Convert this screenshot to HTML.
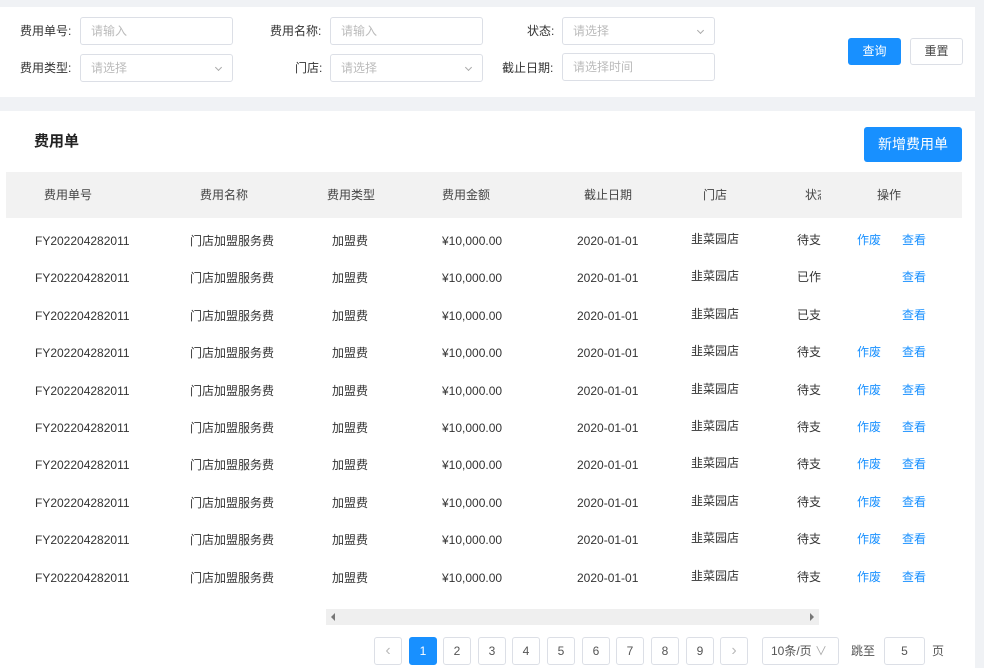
<!DOCTYPE html><html><head><meta charset="utf-8"><style>
*{margin:0;padding:0;box-sizing:border-box}
body{width:984px;height:668px;background:#f0f2f5;font-family:"Liberation Sans","Noto Sans CJK SC",sans-serif;font-size:12px;color:#333;position:relative;overflow:hidden}
.a{position:absolute;white-space:nowrap}
.card{position:absolute;background:#fff;left:0;width:975px}
.lbl{position:absolute;font-size:12px;color:#333;text-align:right;line-height:28px;white-space:nowrap}
.in{position:absolute;height:28px;border:1px solid #dcdfe6;border-radius:3px;color:#bbb;font-size:12px;line-height:26px;padding-left:10px;white-space:nowrap}
.chev{position:absolute;right:11px;top:10px;width:5px;height:5px;border-right:1px solid #aaa;border-bottom:1px solid #aaa;transform:rotate(45deg)}
.th{position:absolute;top:187px;font-size:12px;color:#444;white-space:nowrap;line-height:16px}
.c{position:absolute;font-size:12px;color:#333;white-space:nowrap;line-height:16px;height:16px}
.bl{color:#1890ff}
.pg{position:absolute;top:637px;width:28px;height:28px;border:1px solid #dcdfe6;border-radius:3px;text-align:center;line-height:26px;font-size:12px;color:#555;white-space:nowrap}
</style></head><body>
<div class="card" style="top:7px;height:90px"></div>
<div class="lbl" style="left:20px;top:17px">费用单号:</div>
<div class="in" style="left:80px;top:17px;width:153px">请输入</div>
<div class="lbl" style="left:270px;top:17px">费用名称:</div>
<div class="in" style="left:330px;top:17px;width:153px">请输入</div>
<div class="lbl" style="left:527px;top:17px">状态:</div>
<div class="in" style="left:562px;top:17px;width:153px">请选择<span class="chev"></span></div>
<div class="lbl" style="left:20px;top:54px">费用类型:</div>
<div class="in" style="left:80px;top:54px;width:153px">请选择<span class="chev"></span></div>
<div class="lbl" style="left:295px;top:54px">门店:</div>
<div class="in" style="left:330px;top:54px;width:153px">请选择<span class="chev"></span></div>
<div class="lbl" style="left:502px;top:54px">截止日期:</div>
<div class="in" style="left:562px;top:53px;width:153px">请选择时间</div>
<div class="a" style="left:848px;top:38px;width:53px;height:27px;background:#1890ff;border-radius:3px;color:#fff;text-align:center;line-height:27px">查询</div>
<div class="a" style="left:910px;top:38px;width:53px;height:27px;border:1px solid #dcdfe6;border-radius:3px;color:#444;text-align:center;line-height:25px">重置</div>

<div class="card" style="top:111px;height:557px"></div>
<div class="a" style="left:34px;top:130px;font-size:15px;font-weight:bold;color:#222">费用单</div>
<div class="a" style="left:864px;top:127px;width:98px;height:35px;background:#1890ff;border-radius:3px;color:#fff;text-align:center;line-height:35px;font-size:14px">新增费用单</div>
<div class="a" style="left:6px;top:172px;width:956px;height:46px;background:#f2f2f2"></div>
<div class="th" style="left:44px">费用单号</div>
<div class="th" style="left:200px">费用名称</div>
<div class="th" style="left:327px">费用类型</div>
<div class="th" style="left:442px">费用金额</div>
<div class="th" style="left:584px">截止日期</div>
<div class="th" style="left:703px">门店</div>
<div class="th" style="left:805px;width:16px;overflow:hidden">状态</div>
<div class="th" style="left:877px">操作</div>

<div id="rows"></div>
<div class="a" style="left:326px;top:609px;width:493px;height:16px;background:#efefef"></div>
<div class="a" style="left:331px;top:613px;width:0;height:0;border-top:4px solid transparent;border-bottom:4px solid transparent;border-right:4px solid #777"></div>
<div class="a" style="left:810px;top:613px;width:0;height:0;border-top:4px solid transparent;border-bottom:4px solid transparent;border-left:4px solid #777"></div>
<div class="pg" style="left:374px;color:#bbb;font-size:16px">‹</div>
<div class="pg" style="left:409px;background:#1890ff;border-color:#1890ff;color:#fff">1</div>
<div class="pg" style="left:443px">2</div>
<div class="pg" style="left:478px">3</div>
<div class="pg" style="left:512px">4</div>
<div class="pg" style="left:547px">5</div>
<div class="pg" style="left:582px">6</div>
<div class="pg" style="left:616px">7</div>
<div class="pg" style="left:651px">8</div>
<div class="pg" style="left:686px">9</div>
<div class="pg" style="left:720px;color:#bbb;font-size:16px">›</div>
<div class="pg" style="left:762px;width:77px;text-align:left;padding-left:8px">10条/页 <span style="color:#aaa">∨</span></div>
<div class="a" style="left:851px;top:643px;color:#555;line-height:16px">跳至</div>
<div class="pg" style="left:884px;width:41px">5</div>
<div class="a" style="left:932px;top:643px;color:#555;line-height:16px">页</div>
<script>
var st=["待支","已作","已支","待支","待支","待支","待支","待支","待支","待支"],h="";
for(var i=0;i<10;i++){var y=Math.round(233+i*37.4);
h+='<div class="c" style="left:35px;top:'+y+'px">FY202204282011</div><div class="c" style="left:190px;top:'+y+'px">门店加盟服务费</div><div class="c" style="left:332px;top:'+y+'px">加盟费</div><div class="c" style="left:442px;top:'+y+'px">¥10,000.00</div><div class="c" style="left:577px;top:'+y+'px">2020-01-01</div><div class="c" style="left:691px;top:'+(y-2)+'px">韭菜园店</div><div class="c" style="left:797px;top:'+(y-1)+'px">'+st[i]+'</div>'+(i==1||i==2?'':'<div class="c bl" style="left:857px;top:'+(y-1)+'px">作废</div>')+'<div class="c bl" style="left:902px;top:'+(y-1)+'px">查看</div>';}
document.getElementById("rows").innerHTML=h;
</script>
</body></html>
